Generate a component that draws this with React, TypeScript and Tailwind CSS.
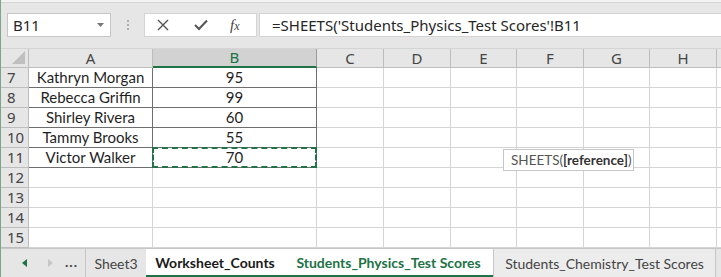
import React from 'react';

const rows = [
  { n: 7, name: 'Kathryn Morgan', score: '95' },
  { n: 8, name: 'Rebecca Griffin', score: '99' },
  { n: 9, name: 'Shirley Rivera', score: '60' },
  { n: 10, name: 'Tammy Brooks', score: '55' },
  { n: 11, name: 'Victor Walker', score: '70' },
  { n: 12 },
  { n: 13 },
  { n: 14 },
  { n: 15 },
];

const restCols = [
  { key: 'C', w: 'w-[67px]' },
  { key: 'D', w: 'w-[67px]' },
  { key: 'E', w: 'w-[66px]' },
  { key: 'F', w: 'w-[67px]' },
  { key: 'G', w: 'w-[66px]' },
  { key: 'H', w: 'w-[67px]' },
];

const font = { fontFamily: 'Lato, "Noto Sans", sans-serif' };
const uiFont = { fontFamily: '"Noto Sans", "Open Sans", sans-serif' };

export default function App() {
  return (
    <div
      className="relative w-[721px] h-[277px] overflow-hidden bg-[#e6e6e6] border-l border-[#7ea58c] text-[15px] text-[#1f1f1f]"
      style={font}
    >
      {/* ribbon edge */}
      <div className="h-[3px] bg-[#f3f3f3] border-b border-[#d4d4d4]" />

      {/* formula bar */}
      <div className="flex items-center h-[45px] pb-[1px]">
        <div className="ml-[6px] w-[104px] h-[24px] bg-white border border-[#c6c6c6] flex items-center justify-between pl-[5px] pr-[6px]">
          <span className="text-[15px] text-[#262626]" style={uiFont}>B11</span>
          <svg width="7" height="4" viewBox="0 0 7 4">
            <path d="M0 0 L7 0 L3.5 4 Z" fill="#777" />
          </svg>
        </div>
        <div className="w-[33px] flex flex-col items-center gap-[2px]">
          <span className="w-[2px] h-[2px] bg-[#b0b0b0]" />
          <span className="w-[2px] h-[2px] bg-[#b0b0b0]" />
          <span className="w-[2px] h-[2px] bg-[#b0b0b0]" />
        </div>
        <div className="w-[113px] h-[24px] bg-white border border-[#d4d4d4] flex items-center">
          <svg className="ml-[12px]" width="12" height="12" viewBox="0 0 12 12">
            <path d="M1 1 L11 11 M11 1 L1 11" stroke="#555" strokeWidth="1.4" />
          </svg>
          <svg className="ml-[25px]" width="14" height="12" viewBox="0 0 14 12">
            <path d="M1 6 L5 10 L13 1.5" stroke="#555" strokeWidth="2" fill="none" />
          </svg>
          <span
            className="ml-[22px] text-[15px] italic text-[#444]"
            style={{ fontFamily: '"Liberation Serif", serif' }}
          >
            f<span className="text-[12px]">x</span>
          </span>
        </div>
        <div
          className="ml-[2px] flex-1 h-[24px] bg-white border-y border-l border-[#d4d4d4] flex items-center pl-[12px] text-[15px] text-[#262626] whitespace-nowrap"
          style={uiFont}
        >
          =SHEETS('Students_Physics_Test Scores'!B11
        </div>
      </div>

      {/* column header */}
      <div className="flex h-[20px] bg-[#e6e6e6] border-t border-[#d4d4d4] text-[#444]" style={uiFont}>
        <div className="w-[28px] h-full border-r border-b border-[#bdbdbd] flex items-end justify-end pr-[3px] pb-[3px]">
          <svg width="13" height="13" viewBox="0 0 13 13">
            <path d="M13 0 L13 13 L0 13 Z" fill="#bfbfbf" />
          </svg>
        </div>
        <div className="w-[124px] border-r border-b border-[#bdbdbd] flex items-center justify-center">A</div>
        <div className="w-[164px] bg-[#d2d2d2] border-r border-[#9b9b9b] border-b-2 border-b-[#217346] flex items-center justify-center text-[#217346]">
          B
        </div>
        {restCols.map((c) => (
          <div key={c.key} className={`${c.w} border-r border-b border-[#bdbdbd] flex items-center justify-center`}>
            {c.key}
          </div>
        ))}
        <div className="flex-1 border-b border-[#bdbdbd]" />
      </div>

      {/* grid rows */}
      {rows.map((r) => {
        const inTable = r.name !== undefined;
        return (
          <div key={r.n} className="flex h-[20px] bg-white">
            <div
              className="w-[28px] bg-[#e6e6e6] border-r border-b border-[#bdbdbd] flex items-center pl-[6px] text-[#444]"
              style={uiFont}
            >
              {r.n}
            </div>
            <div
              className={`w-[124px] border-r border-b flex items-center justify-center ${
                inTable ? 'border-[#6e6e6e]' : 'border-[#d4d4d4]'
              }`}
            >
              {r.name}
            </div>
            <div
              className={`relative w-[164px] border-r border-b flex items-center justify-center ${
                inTable ? 'border-[#6e6e6e]' : 'border-[#d4d4d4]'
              }`}
            >
              {r.score}
              {r.n === 11 && (
                <div className="absolute -left-[1px] -top-[1px] -right-[1px] -bottom-[1px] border-2 border-dashed border-[#217346]" />
              )}
            </div>
            {restCols.map((c) => (
              <div key={c.key} className={`${c.w} border-r border-b border-[#d4d4d4]`} />
            ))}
            <div className="flex-1 border-b border-[#d4d4d4]" />
          </div>
        );
      })}

      {/* tooltip */}
      <div className="absolute left-[502px] top-[149px] h-[22px] w-[131px] pl-[7px] bg-white border border-[#c6c6c6] flex items-center text-[13.5px] text-[#555] whitespace-nowrap">
        SHEETS(<b className="text-[#333]">[reference]</b>)
      </div>

      {/* sheet tabs */}
      <div className="flex items-stretch h-[29px] bg-[#e6e6e6] border-t border-[#c6c6c6] text-[14px] whitespace-nowrap">
        <div className="w-[84px] flex items-center">
          <svg className="ml-[21px]" width="5" height="8" viewBox="0 0 5 8">
            <path d="M5 0 L0 4 L5 8 Z" fill="#217346" />
          </svg>
          <svg className="ml-[21px]" width="5" height="8" viewBox="0 0 5 8">
            <path d="M0 0 L5 4 L0 8 Z" fill="#c6c6c6" />
          </svg>
          <span className="ml-[12px] text-[#444] font-bold tracking-[1px] leading-none pb-[2px]">...</span>
        </div>
        <div className="border-l border-[#c6c6c6] w-[61px] flex items-center justify-center text-[#444]">Sheet3</div>
        <div className="w-[138px] bg-white border-b-2 border-[#217346] flex items-center justify-center font-bold text-[#1a1a1a]">
          Worksheet_Counts
        </div>
        <div className="w-[209px] bg-white border-b-2 border-[#217346] flex items-center justify-center font-bold text-[#217346]">
          Students_Physics_Test Scores
        </div>
        <div className="w-[223px] bg-[#ececec] border-x border-[#c6c6c6] flex items-center justify-center text-[#444]">
          Students_Chemistry_Test Scores
        </div>
      </div>
    </div>
  );
}
